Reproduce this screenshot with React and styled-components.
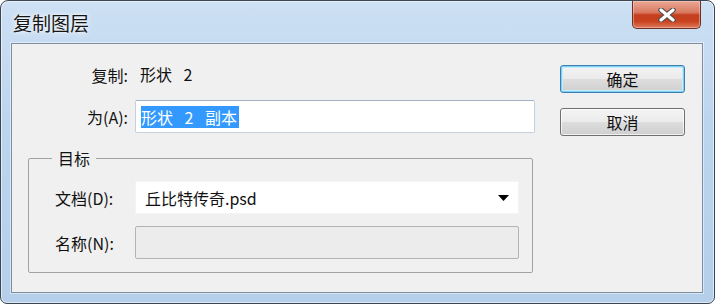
import React from "react";
import styled, { createGlobalStyle } from "styled-components";

const GlobalStyle = createGlobalStyle`
  html, body { margin: 0; padding: 0; background: #ffffff; }
  body {
    font-family: "Noto Sans CJK SC", "Noto Sans", "Liberation Sans", sans-serif;
    font-size: 16px;
    color: #111111;
  }
  * { box-sizing: border-box; }
`;

const Window = styled.div`
  width: 715px;
  height: 304px;
  border: 1px solid #3c4652;
  border-radius: 8px 8px 7px 7px;
  background: linear-gradient(180deg, #cde0f4 0%, #bcd5ee 40%, #b5cfeb 100%);
  box-shadow: inset 0 0 0 1px rgba(255, 255, 255, 0.55);
  display: flex;
  flex-direction: column;
  overflow: hidden;
`;

const TitleBar = styled.div`
  height: 42px;
  flex: none;
  display: flex;
  align-items: flex-start;
  justify-content: space-between;
  padding: 0 13px 0 12px;
`;

const Title = styled.div`
  line-height: 44px;
  font-size: 19px;
  color: #151515;
  text-shadow: 0 0 6px rgba(255, 255, 255, 0.95), 0 0 3px rgba(255, 255, 255, 0.9);
`;

const CloseButton = styled.div`
  width: 69px;
  height: 28px;
  border: 1px solid #6e2f24;
  border-top: none;
  border-radius: 0 0 5px 5px;
  background: linear-gradient(
    180deg,
    #e9a896 0%,
    #da7a62 42%,
    #c43e1f 52%,
    #c9421f 75%,
    #dd7a5d 100%
  );
  box-shadow: inset 0 0 0 1px rgba(255, 215, 200, 0.45);
  display: flex;
  align-items: center;
  justify-content: center;
`;

const Client = styled.div`
  flex: 1;
  margin: 0 11px 10px 10px;
  border: 1px solid #7d8ea2;
  box-shadow: 0 0 0 1px rgba(255, 255, 255, 0.45);
  background: #f0f0f0;
  display: flex;
`;

const LeftPanel = styled.div`
  width: 548px;
  flex: none;
  padding-top: 14px;
`;

const RightPanel = styled.div`
  padding-top: 21px;
  display: flex;
  flex-direction: column;
  gap: 15px;
`;

const FormGrid = styled.div`
  display: grid;
  grid-template-columns: ${(p) => p.$labelWidth}px ${(p) => p.$fieldWidth}px;
  column-gap: 7px;
  row-gap: ${(p) => p.$rowGap}px;
  align-items: center;
`;

const Label = styled.div`
  text-align: ${(p) => p.$align || "right"};
  white-space: nowrap;
  line-height: 22px;
`;

const StaticValue = styled.div`
  height: 33px;
  line-height: 33px;
  padding-left: 5px;
  word-spacing: 8px;
`;

const TextField = styled.div`
  height: 33px;
  border: 1px solid #c3d1df;
  border-top-color: #9fb2c6;
  border-radius: 2px;
  background: #ffffff;
  padding: 0 5px;
  display: flex;
  align-items: center;
`;

const Selected = styled.span`
  background: #3399ff;
  color: #ffffff;
  line-height: 22px;
  word-spacing: 8px;
  padding-right: 2px;
`;

const Group = styled.fieldset`
  margin: 13px 0 0 16px;
  width: 505px;
  border: 1px solid #a2a2a2;
  border-radius: 2px;
  padding: 11px 13px 13px 26px;
`;

const Legend = styled.legend`
  margin-left: -3px;
  padding: 0 6px;
  line-height: 24px;
`;

const ComboBox = styled.div`
  height: 33px;
  background: #ffffff;
  border: 1px solid #f4f4f4;
  display: flex;
  align-items: center;
  justify-content: space-between;
  padding: 0 9px 0 9px;
`;

const DisabledField = styled.div`
  height: 33px;
  border: 1px solid #b4b4b4;
  border-radius: 2px;
  background: #ececec;
`;

const Button = styled.div`
  width: 125px;
  height: 28px;
  border: 1px solid ${(p) => (p.$default ? "#3c7fb1" : "#707070")};
  border-radius: 3px;
  background: linear-gradient(180deg, #f4f4f4 0%, #ebebeb 48%, #dddddd 52%, #cfcfcf 100%);
  box-shadow: ${(p) =>
    p.$default
      ? "inset 0 0 0 1px #7fd0f3, inset 0 0 0 2px #c4ecfb"
      : "inset 0 0 0 1px rgba(255,255,255,0.7)"};
  display: flex;
  align-items: center;
  justify-content: center;
  font-size: 16px;
  color: #111111;
`;

function CloseGlyph() {
  return (
    <svg width="18" height="14" viewBox="0 0 18 14">
      <path d="M3 2 L15 12 M15 2 L3 12" stroke="#4e4e4e" strokeWidth="5.4" strokeLinecap="round" />
      <path d="M3 2 L15 12 M15 2 L3 12" stroke="#ffffff" strokeWidth="3.2" strokeLinecap="round" />
    </svg>
  );
}

function DropArrow() {
  return (
    <svg width="11" height="6" viewBox="0 0 11 6">
      <polygon points="0,0 11,0 5.5,6" fill="#000000" />
    </svg>
  );
}

export default function App() {
  return (
    <>
      <GlobalStyle />
      <Window>
        <TitleBar>
          <Title>复制图层</Title>
          <CloseButton>
            <CloseGlyph />
          </CloseButton>
        </TitleBar>
        <Client>
          <LeftPanel>
            <FormGrid $labelWidth={116} $fieldWidth={400} $rowGap={9}>
              <Label>复制:</Label>
              <StaticValue>形状 2</StaticValue>
              <Label>为(A):</Label>
              <TextField>
                <Selected>形状 2 副本</Selected>
              </TextField>
            </FormGrid>
            <Group>
              <Legend>目标</Legend>
              <FormGrid $labelWidth={73} $fieldWidth={384} $rowGap={12}>
                <Label $align="left">文档(D):</Label>
                <ComboBox>
                  <span>丘比特传奇.psd</span>
                  <DropArrow />
                </ComboBox>
                <Label $align="left">名称(N):</Label>
                <DisabledField />
              </FormGrid>
            </Group>
          </LeftPanel>
          <RightPanel>
            <Button $default>确定</Button>
            <Button>取消</Button>
          </RightPanel>
        </Client>
      </Window>
    </>
  );
}
